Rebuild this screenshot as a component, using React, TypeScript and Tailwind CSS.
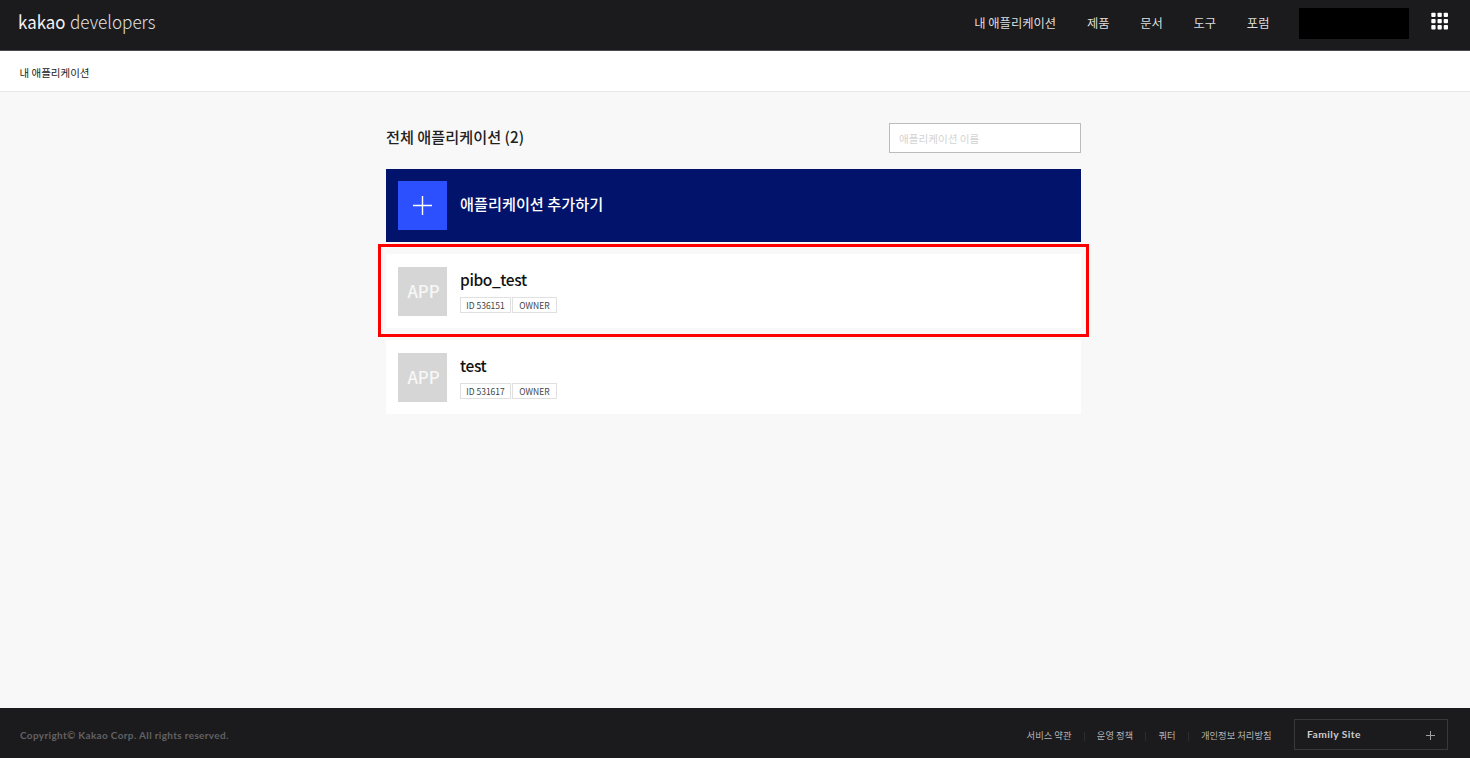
import React from "react";

const navItems = ["내 애플리케이션", "제품", "문서", "도구", "포럼"];
const footerLinks = ["서비스 약관", "운영 정책", "쿼터", "개인정보 처리방침"];
const apps = [
  { name: "pibo_test", id: "536151", role: "OWNER", highlighted: true },
  { name: "test", id: "531617", role: "OWNER", highlighted: false },
];

function Logo() {
  return (
    <svg width="144" height="44" viewBox="0 0 144 44" className="overflow-visible font-['Noto_Sans_CJK_KR','Open_Sans',sans-serif]" aria-label="kakao developers">
      <text x="0" y="28.5" fontSize="18.5" fontWeight="400" fill="#f2f2f2" textLength="47.5" lengthAdjust="spacingAndGlyphs">kakao</text>
      <text x="52" y="28.5" fontSize="18.5" fontWeight="300" fill="#e2e2e2" textLength="85.5" lengthAdjust="spacingAndGlyphs">developers</text>
    </svg>
  );
}

function GridIcon() {
  const steps = [0, 6.2, 12.4];
  return (
    <svg width="18" height="18" viewBox="0 0 18 18" fill="#ffffff">
      {steps.map((y) => steps.map((x) => <rect key={`${x}-${y}`} x={x + 0.3} y={y + 0.7} width="4.3" height="4.3" rx="0.9" />))}
    </svg>
  );
}

function Header() {
  return (
    <header className="flex h-[51px] shrink-0 items-start border-b border-[#4c4c4e] bg-[#1b1b1d] pl-[18px] pr-[21px]">
      <Logo />
      <nav className="ml-auto flex gap-[30.7px] pt-[13px] text-[12.3px] leading-[20px] text-[#dedede]">
        {navItems.map((item) => <a key={item} className="whitespace-nowrap">{item}</a>)}
      </nav>
      <div className="ml-[29.5px] mt-2 h-[31px] w-[110px] bg-black" />
      <button className="ml-[22px] mt-3"><GridIcon /></button>
    </header>
  );
}

function AppRow({ app }: { app: (typeof apps)[number] }) {
  return (
    <li className="relative flex h-[74px] bg-white pl-3 pt-[13px]">
      <div className="flex h-[49px] w-[49px] items-center justify-center bg-[#d6d6d6] pl-0.5 text-[16.8px] font-medium leading-none text-[#f7f7f7]">APP</div>
      <div className="ml-[13px]">
        <div className="text-[15.5px] font-medium leading-6 tracking-[-0.38px] text-[#111111]">{app.name}</div>
        <div className="mt-[6px] flex gap-px text-[8.5px] leading-[14px] text-[#444444]">
          <span className="flex h-4 w-[51px] justify-center whitespace-nowrap border border-[#e0e0e0]">ID {app.id}</span>
          <span className="flex h-4 w-[45px] justify-center whitespace-nowrap border border-[#e0e0e0]">{app.role}</span>
        </div>
      </div>
      {app.highlighted && <div className="pointer-events-none absolute -left-2 -right-2 -top-2.5 h-[93px] border-[3px] border-[#ff0000]" />}
    </li>
  );
}

function Footer() {
  return (
    <footer className="flex h-[50px] shrink-0 items-center bg-[#1b1b1d] pl-5 pr-[22px] pt-[3px]">
      <p className="pt-px font-['Lato',sans-serif] text-[10px] font-bold tracking-[0.34px] text-[#626264]">Copyright© Kakao Corp. All rights reserved.</p>
      <ul className="ml-auto flex items-center pt-[3px] text-[9.3px] text-[#b5b5b5]">
        {footerLinks.map((link, i) => (
          <li key={link} className="flex items-center whitespace-nowrap">
            {i > 0 && <span className="mx-[12.2px] h-[9px] w-px bg-[#2c2c2e]" />}
            {link}
          </li>
        ))}
      </ul>
      <button className="ml-[22.5px] flex h-[31px] w-[154px] items-center justify-between border border-[#39393b] pl-3 pr-3 font-['Lato',sans-serif] text-[10.3px] font-bold tracking-[0.42px] text-[#cccccc]">
        Family Site
        <svg width="10" height="10" viewBox="0 0 10 10" stroke="#a0a0a0" strokeWidth="1"><path d="M5.5 1v9M1 5.5h9" /></svg>
      </button>
    </footer>
  );
}

export default function App() {
  return (
    <div className="flex h-[758px] w-[1470px] flex-col overflow-hidden bg-[#f8f8f8] font-['Noto_Sans_CJK_KR','Noto_Sans',sans-serif]">
      <Header />
      <div className="flex h-[41px] shrink-0 items-center border-b border-[#e8e8e8] bg-white pl-[19.5px] pt-[3px] text-[10.5px] text-[#222222]">내 애플리케이션</div>
      <main className="ml-[386px] w-[695px] flex-1 pt-[31px]">
        <div className="flex h-[31px] items-start justify-between">
          <h1 className="text-[15.2px] font-medium leading-[27px] text-[#222222]">전체 애플리케이션 (2)</h1>
          <input placeholder="애플리케이션 이름" className="h-[30px] w-[192px] border border-[#bcbcbc] bg-white px-[9px] text-[10.6px] outline-none placeholder:text-[#d3d3d3]" />
        </div>
        <button className="mt-[15px] flex h-[73px] w-full bg-[#02136b] pl-3 pt-3 text-left text-[15.2px] font-medium text-white">
          <span className="flex h-[49px] w-[49px] items-center justify-center bg-[#2d50ff]">
            <svg width="19" height="19" viewBox="0 0 19 19" stroke="#ffffff" strokeWidth="1.4"><path d="M9.5 0v19M0 9.5h19" /></svg>
          </span>
          <span className="ml-[13px] leading-[45px]">애플리케이션 추가하기</span>
        </button>
        <ul className="mt-[12px] flex flex-col gap-3">
          {apps.map((app) => <AppRow key={app.id} app={app} />)}
        </ul>
      </main>
      <Footer />
    </div>
  );
}
